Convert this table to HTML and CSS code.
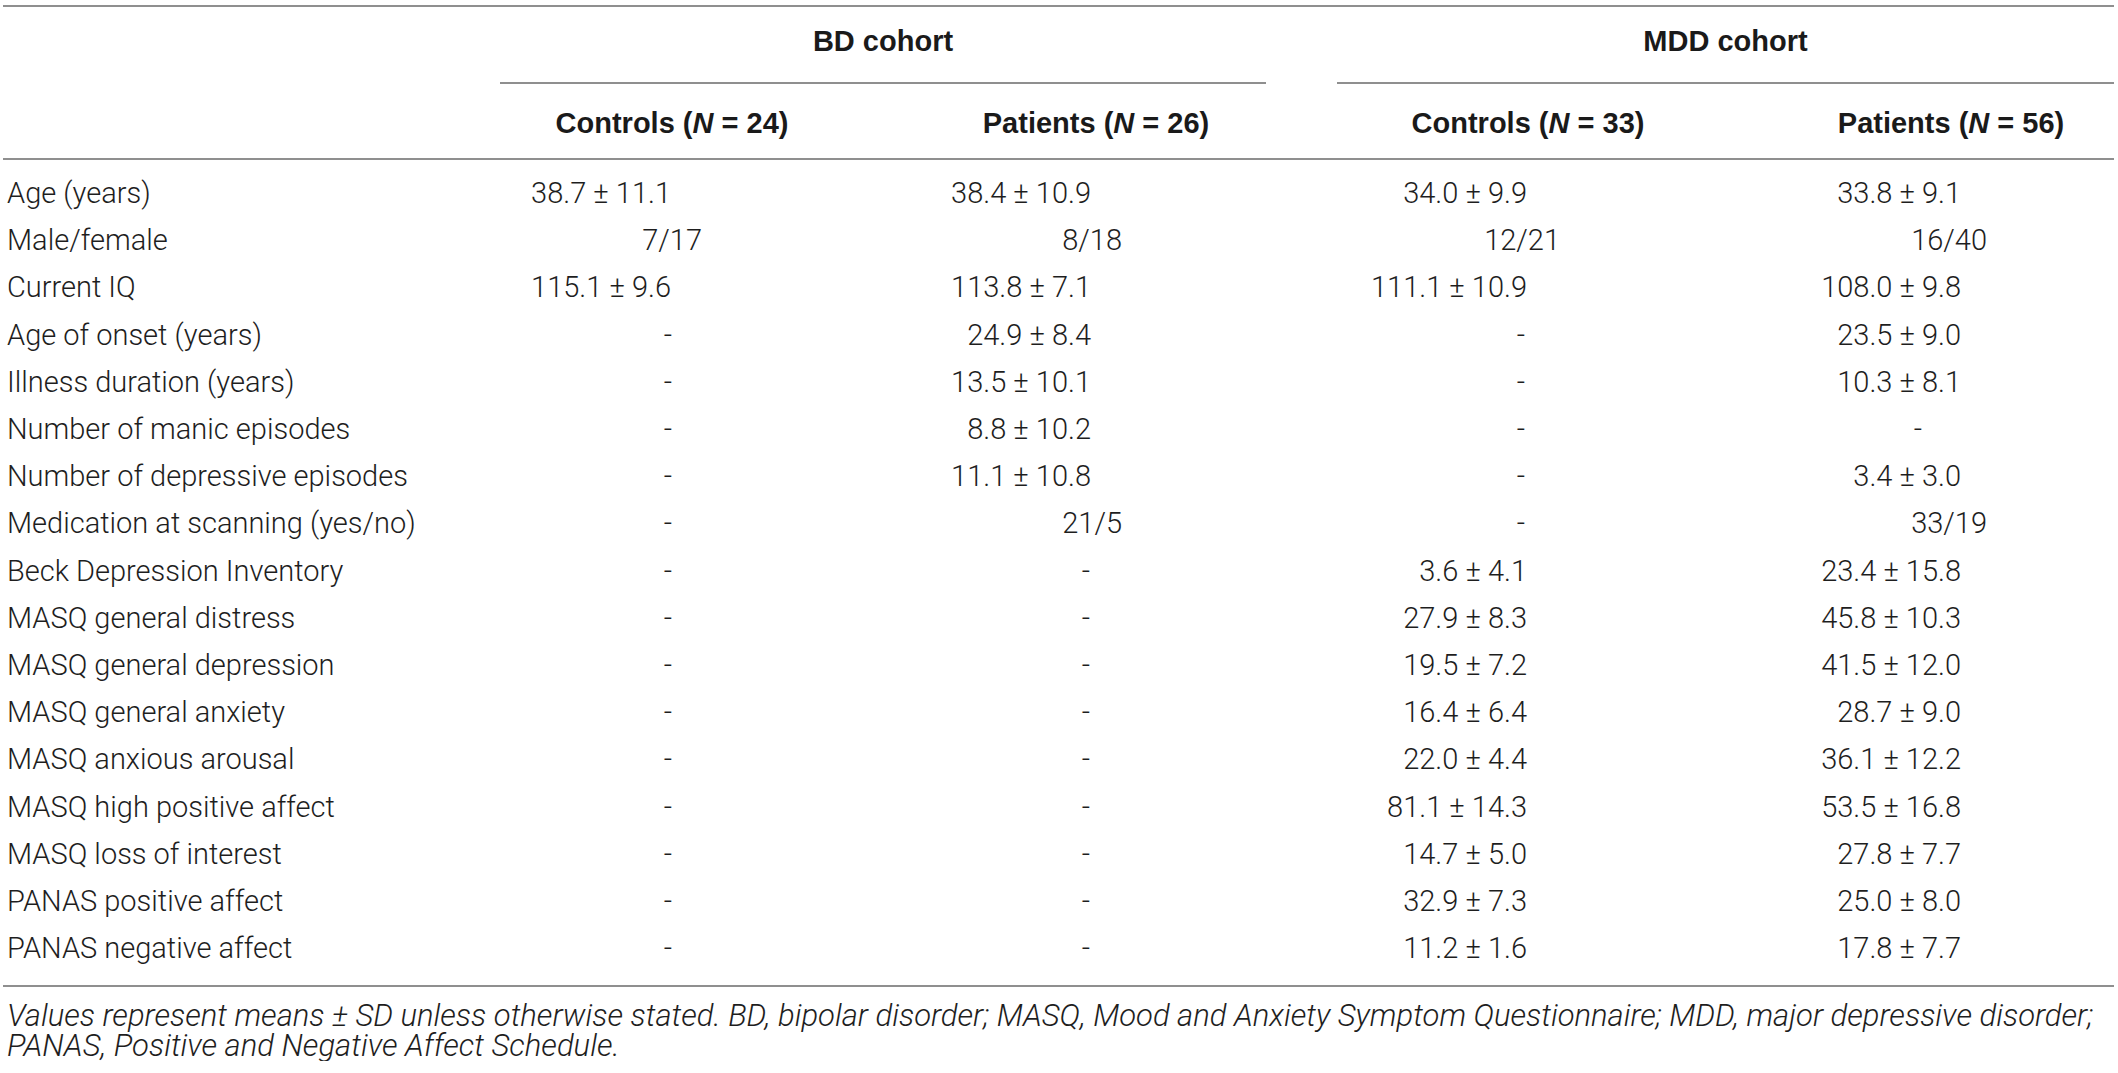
FILE: index.html
```html
<!DOCTYPE html>
<html lang="en">
<head>
<meta charset="utf-8">
<title>Demographic and clinical characteristics</title>
<link rel="stylesheet" href="styles.css">
</head>
<body>
<div class="page">
  <table class="data">
    <colgroup>
      <col class="c-label">
      <col class="c-1">
      <col class="c-2">
      <col class="c-3">
      <col class="c-4">
    </colgroup>
    <thead>
      <tr class="group-row">
        <th></th>
        <th colspan="2" class="group group-bd"><div class="group-title">BD cohort</div></th>
        <th colspan="2" class="group group-mdd"><div class="group-title">MDD cohort</div></th>
      </tr>
      <tr class="sub-row">
        <th></th>
        <th>Controls (<i>N</i> = 24)</th>
        <th>Patients (<i>N</i> = 26)</th>
        <th>Controls (<i>N</i> = 33)</th>
        <th class="last">Patients (<i>N</i> = 56)</th>
      </tr>
    </thead>
    <tbody>
      <tr><td>Age (years)</td><td class="n">38.7 ± 11.1</td><td class="n">38.4 ± 10.9</td><td class="n">34.0 ± 9.9</td><td class="n">33.8 ± 9.1</td></tr>
      <tr><td>Male/female</td><td class="f">7/17</td><td class="f">8/18</td><td class="f">12/21</td><td class="f">16/40</td></tr>
      <tr><td>Current IQ</td><td class="n">115.1 ± 9.6</td><td class="n">113.8 ± 7.1</td><td class="n">111.1 ± 10.9</td><td class="n">108.0 ± 9.8</td></tr>
      <tr><td>Age of onset (years)</td><td class="d">-</td><td class="n">24.9 ± 8.4</td><td class="d">-</td><td class="n">23.5 ± 9.0</td></tr>
      <tr><td>Illness duration (years)</td><td class="d">-</td><td class="n">13.5 ± 10.1</td><td class="d">-</td><td class="n">10.3 ± 8.1</td></tr>
      <tr><td>Number of manic episodes</td><td class="d">-</td><td class="n">8.8 ± 10.2</td><td class="d">-</td><td class="d">-</td></tr>
      <tr><td>Number of depressive episodes</td><td class="d">-</td><td class="n">11.1 ± 10.8</td><td class="d">-</td><td class="n">3.4 ± 3.0</td></tr>
      <tr><td>Medication at scanning (yes/no)</td><td class="d">-</td><td class="f">21/5</td><td class="d">-</td><td class="f">33/19</td></tr>
      <tr><td>Beck Depression Inventory</td><td class="d">-</td><td class="d">-</td><td class="n">3.6 ± 4.1</td><td class="n">23.4 ± 15.8</td></tr>
      <tr><td>MASQ general distress</td><td class="d">-</td><td class="d">-</td><td class="n">27.9 ± 8.3</td><td class="n">45.8 ± 10.3</td></tr>
      <tr><td>MASQ general depression</td><td class="d">-</td><td class="d">-</td><td class="n">19.5 ± 7.2</td><td class="n">41.5 ± 12.0</td></tr>
      <tr><td>MASQ general anxiety</td><td class="d">-</td><td class="d">-</td><td class="n">16.4 ± 6.4</td><td class="n">28.7 ± 9.0</td></tr>
      <tr><td>MASQ anxious arousal</td><td class="d">-</td><td class="d">-</td><td class="n">22.0 ± 4.4</td><td class="n">36.1 ± 12.2</td></tr>
      <tr><td>MASQ high positive affect</td><td class="d">-</td><td class="d">-</td><td class="n">81.1 ± 14.3</td><td class="n">53.5 ± 16.8</td></tr>
      <tr><td>MASQ loss of interest</td><td class="d">-</td><td class="d">-</td><td class="n">14.7 ± 5.0</td><td class="n">27.8 ± 7.7</td></tr>
      <tr><td>PANAS positive affect</td><td class="d">-</td><td class="d">-</td><td class="n">32.9 ± 7.3</td><td class="n">25.0 ± 8.0</td></tr>
      <tr><td>PANAS negative affect</td><td class="d">-</td><td class="d">-</td><td class="n">11.2 ± 1.6</td><td class="n">17.8 ± 7.7</td></tr>
    </tbody>
  </table>
  <p class="note">Values represent means ± SD unless otherwise stated. BD, bipolar disorder; MASQ, Mood and Anxiety Symptom Questionnaire; MDD, major depressive disorder; PANAS, Positive and Negative Affect Schedule.</p>
</div>
</body>
</html>
```

FILE: styles.css
```css
html, body {
  margin: 0;
  padding: 0;
  background: #ffffff;
}

body {
  font-family: Roboto, "Liberation Sans", Arial, sans-serif;
  font-weight: 300;
  color: #1e1e1e;
  font-size: 29px;
}

.page {
  width: 2111px;
  padding: 5px 0 0 3px;
}

.data {
  width: 2111px;
  table-layout: fixed;
  border-collapse: collapse;
  border-top: 2px solid #8f8f8f;
  border-bottom: 2px solid #8f8f8f;
}

.c-label { width: 459px; }
.c-1 { width: 420px; }
.c-2 { width: 428px; }
.c-3 { width: 436px; }
.c-4 { width: 368px; }

th {
  font-family: "Liberation Sans", Arial, sans-serif;
  font-size: 29px;
  font-weight: bold;
  color: #1a1a1a;
  line-height: 34px;
  padding: 0;
  text-align: center;
  white-space: nowrap;
}

.group-row th {
  padding-top: 17px;
  vertical-align: top;
}

.group-title {
  padding-bottom: 24px;
  border-bottom: 2px solid #8f8f8f;
}

.group-bd .group-title {
  margin: 0 44px 0 38px;
}

.group-mdd .group-title {
  margin: 0 0 0 27px;
}

.sub-row th {
  padding-top: 22px;
  padding-bottom: 18px;
  border-bottom: 2px solid #8f8f8f;
}

.sub-row th.last {
  padding-left: 42px;
}

td {
  padding: 0;
  line-height: 47.2px;
  white-space: nowrap;
  text-align: right;
}

td:first-child {
  text-align: left;
  padding-left: 4px;
}

tbody tr:first-child td {
  padding-top: 10px;
}

tbody tr:last-child td {
  padding-bottom: 13px;
}

td:nth-child(2) { --num: 211px; --frac: 180px; --dash: 210px; }
td:nth-child(3) { --num: 219px; --frac: 188px; --dash: 220px; }
td:nth-child(4) { --num: 219px; --frac: 186px; --dash: 221px; }
td:nth-child(5) { --num: 153px; --frac: 127px; --dash: 192px; }

td.n { padding-right: var(--num); }
td.f { padding-right: var(--frac); }
td.d { padding-right: var(--dash); }

.note {
  margin: 14px 0 0;
  padding-left: 4px;
  font-size: 31px;
  font-style: italic;
  line-height: 30px;
  color: #1e1e1e;
}
```
